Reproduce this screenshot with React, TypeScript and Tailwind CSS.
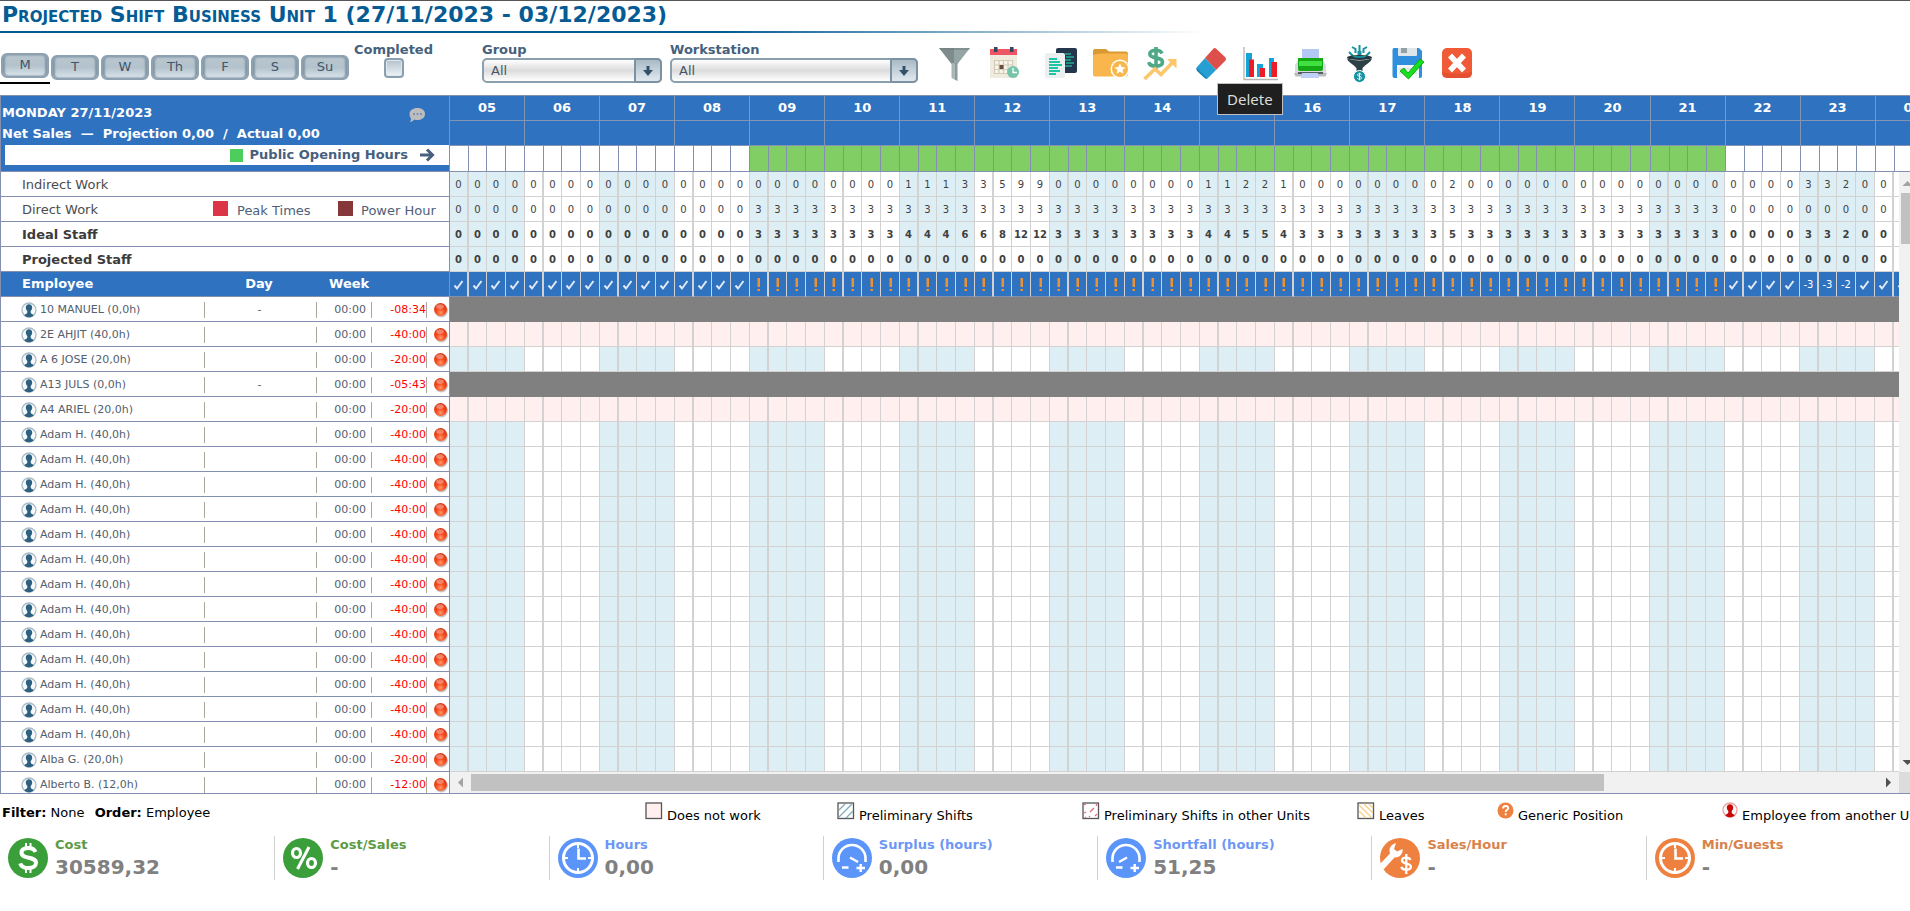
import React, { useState } from "react";

const DAYS = ["M", "T", "W", "Th", "F", "S", "Su"];

const HOURS = [
  "05", "06", "07", "08", "09", "10", "11", "12", "13", "14", "15", "16",
  "17", "18", "19", "20", "21", "22", "23", "00",
];

// quarters that need indirect work, by hour
const INDIRECT: Record<string, number[]> = {
  "11": [1, 1, 1, 3],
  "12": [3, 5, 9, 9],
  "15": [1, 1, 2, 2],
  "16": [1, 0, 0, 0],
  "18": [0, 2, 0, 0],
  "23": [3, 3, 2, 0],
};

interface Slot {
  key: string;
  quarter: number;
  shaded: boolean;
  open: boolean;
  indirect: number;
  direct: number;
}

const SLOTS: Slot[] = HOURS.flatMap((hour, h) =>
  [0, 1, 2, 3].map((quarter) => {
    const open = h >= 4 && h <= 16;
    return {
      key: `${hour}-${quarter}`,
      quarter,
      shaded: h % 2 === 0 && hour !== "00",
      open,
      indirect: INDIRECT[hour] ? INDIRECT[hour][quarter] : 0,
      direct: open ? 3 : 0,
    };
  })
);

type RowKind = "normal" | "off" | "blocked";

interface Employee {
  name: string;
  day: string;
  diff: string;
  kind: RowKind;
}

const EMPLOYEES: Employee[] = [
  { name: "10 MANUEL (0,0h)", day: "-", diff: "-08:34", kind: "blocked" },
  { name: "2E AHJIT (40,0h)", day: "", diff: "-40:00", kind: "off" },
  { name: "A 6 JOSE (20,0h)", day: "", diff: "-20:00", kind: "normal" },
  { name: "A13 JULS (0,0h)", day: "-", diff: "-05:43", kind: "blocked" },
  { name: "A4 ARIEL (20,0h)", day: "", diff: "-20:00", kind: "off" },
  ...Array.from({ length: 13 }, (): Employee => ({ name: "Adam H. (40,0h)", day: "", diff: "-40:00", kind: "normal" })),
  { name: "Alba G. (20,0h)", day: "", diff: "-20:00", kind: "normal" },
  { name: "Alberto B. (12,0h)", day: "", diff: "-12:00", kind: "normal" },
];

/* ---------- icons ---------- */

function UserIcon({ color, ring }: { color: string; ring: string }) {
  return (
    <svg width="16" height="16" viewBox="0 0 16 16" className="shrink-0">
      <circle cx="8" cy="8" r="7" fill="#f7fafc" stroke={ring} strokeWidth="1.3" />
      <path d="M8 2.200c2 0 3.200 1.400 3.200 3.300 0 1.500-.7 2.600-1.500 3.400v1.700c.3 1.600 2.300 1.500 3 2.600-1.200 1.400-2.900 2-4.700 2s-3.500-.6-4.700-2c.7-1.100 2.700-1 3-2.600V8.900C5.500 8.100 4.800 7 4.800 5.500c0-1.900 1.200-3.300 3.200-3.300z" fill={color} />
    </svg>
  );
}

function RedBall() {
  return (
    <svg width="16" height="17" viewBox="0 0 16 17">
      <defs>
        <radialGradient id="ball" cx="50%" cy="75%" r="75%">
          <stop offset="0%" stopColor="#ff9a6a" />
          <stop offset="45%" stopColor="#f8481c" />
          <stop offset="100%" stopColor="#d2330f" />
        </radialGradient>
      </defs>
      <circle cx="8.500" cy="9" r="6.500" fill="#000" opacity=".22" />
      <circle cx="7.500" cy="7.500" r="6.500" fill="url(#ball)" />
      <ellipse cx="7" cy="4.600" rx="3.800" ry="2.400" fill="#fff" opacity=".35" />
    </svg>
  );
}

function FunnelIcon() {
  return (
    <svg width="40" height="40" viewBox="0 0 40 40">
      <path d="M1 4h16v16h-3.500z" fill="#7f8c8d" />
      <path d="M16 4h16L19.500 20H16z" fill="#95a5a5" />
      <path d="M13.500 19h3v16.500l-3-1.800z" fill="#a9b5b5" />
      <path d="M16.500 19h3v18l-3-1.500z" fill="#8b9a9b" />
      <path d="M1 4h31l-1.500 2h-28z" fill="#6d7b7c" opacity=".5" />
    </svg>
  );
}

function CalendarIcon() {
  return (
    <svg width="40" height="40" viewBox="0 0 40 40">
      <path d="M2 11h27v23H2z" fill="#efecdf" />
      <path d="M2 5h27v6H2z" fill="#ee5565" />
      <path d="M6 3h3.500v5H6zM22 3h3.500v5H22z" fill="#34495e" />
      <path d="M6.500 16.500h18v13h-18zM6.500 21h18M6.500 25.500h18M11 16.500v13M15.500 16.500v13M20 16.500v13" fill="#f8f5ec" stroke="#d3cab6" strokeWidth="1.200" />
      <path d="M11.500 21h4v4h-4z" fill="#6b4c3c" />
      <circle cx="25" cy="28" r="6" fill="#76c5ab" />
      <path d="M25 24v4.500h4" fill="none" stroke="#fff" strokeWidth="1.300" />
    </svg>
  );
}

function CopyIcon() {
  return (
    <svg width="40" height="40" viewBox="0 0 40 40">
      <rect x="18" y="4" width="21" height="25" rx="2" fill="#24364b" />
      <path d="M27 10h6M28 13h8M27 16h6M28 19h8M27 22h7" stroke="#1fae96" strokeWidth="1.600" />
      <rect x="7" y="9" width="20" height="25" rx="2" fill="#eceff0" />
      <path d="M11 15h8M11 18h11M11 21h13M11 24h9M11 27h11M11 30h7" stroke="#1fc6a6" strokeWidth="1.800" />
    </svg>
  );
}

function FolderIcon() {
  return (
    <svg width="42" height="40" viewBox="0 0 42 40">
      <path d="M5 7c0-1.500 1-2 2.500-2H18l3 2.500h17c1.500 0 2 1 2 2.500v8H5z" fill="#d99a34" />
      <path d="M5 11c3-1 7-1.500 13-1.500h20c1.500 0 2 1 2 2.500v18.500c0 1.500-1 2-2.500 2h-30c-1.500 0-2.500-.5-2.500-2z" fill="#f8b64c" />
      <circle cx="32" cy="25" r="9.500" fill="#fff" />
      <circle cx="32" cy="25" r="8" fill="#f8b64c" />
      <path d="M32 19.500l1.600 3.500 3.900.4-2.900 2.600.8 3.800-3.400-2-3.400 2 .8-3.800-2.900-2.600 3.900-.4z" fill="#fff" />
    </svg>
  );
}

function SalesIcon() {
  return (
    <svg width="40" height="40" viewBox="0 0 40 40">
      <path d="M24 9.500c-.8-2-3-3.200-6.200-3.200-3.700 0-6 1.400-6 3.800 0 5.500 12.700 2 12.700 8 0 2.600-2.700 4-6.500 4-4 0-6.800-1.500-7.200-4M18 3v22" fill="none" stroke="#4fa886" strokeWidth="3.600" />
      <path d="M6.500 35L17 25l6 5.500L36 17" fill="none" stroke="#fcc66b" strokeWidth="3.600" />
      <path d="M29 15h9.500v9.500z" fill="#fcc66b" />
    </svg>
  );
}

function EraserIcon() {
  return (
    <svg width="40" height="40" viewBox="0 0 40 40">
      <path d="M25.500 4.500q1.500-1 3 .5l9 8.500q1 1.500 0 3L28 26 17 14z" fill="#dc4f4b" />
      <path d="M17 14l11 12-8 8q-1.500 1-3 0L9 26q-1-1.500 0-3z" fill="#26a0d2" />
      <path d="M8.500 23.500l11 11q-1.500.5-3-.5L9 27q-1-2-.5-3.500z" fill="#1c86b4" />
    </svg>
  );
}

function ChartIcon() {
  return (
    <svg width="42" height="40" viewBox="0 0 42 40">
      <path d="M6 3v32.500h34" fill="none" stroke="#b5b5b5" strokeWidth="1.300" />
      <path d="M8 9h6v24H8zM19 20h6v13h-6zM31 14h5v19h-5z" fill="#12a6d8" />
      <path d="M11 15.500h5V33h-5zM22 24h5v9h-5zM33.500 18H39v15h-5.500z" fill="#ee1c25" />
    </svg>
  );
}

function PrinterIcon() {
  return (
    <svg width="40" height="40" viewBox="0 0 40 40">
      <path d="M14 5h17v10H14z" fill="#b3c8f5" />
      <path d="M7 21l3-5h25l3 5v9H7z" fill="#d9dcdf" />
      <path d="M10 14h25v11q0 2-2 2H12q-2 0-2-2z" fill="#14a814" />
      <path d="M11 17h23v5H11z" fill="#3fe03f" />
      <path d="M6 29h33l-1.500 3.500h-30z" fill="#b9bdc0" />
      <path d="M10 28h25v2H10z" fill="#555f5f" />
      <path d="M14 29h16l1 5H13z" fill="#bcd0fa" />
    </svg>
  );
}

function LeadsIcon() {
  return (
    <svg width="44" height="40" viewBox="0 0 44 40">
      <path d="M14 3l3.500 2v4M29 3l-3.500 2v4M21.500 1v7M11 8l4 4M32 8l-4 4" fill="none" stroke="#12939f" strokeWidth="2" />
      <path d="M19.500 7h4v5h-4z" fill="#12939f" />
      <ellipse cx="21.500" cy="13.500" rx="12.500" ry="2.500" fill="#26363c" />
      <path d="M14 12h15l-3 1.800h-9z" fill="#12939f" />
      <path d="M9 14.500q12.500 4 25 0c-1 4-9 7.500-9.500 10V27h-6v-2.500C18 22 10 18.500 9 14.500z" fill="#2d4047" />
      <circle cx="21.500" cy="32.500" r="6" fill="#12939f" stroke="#fff" strokeWidth="1" />
      <path d="M23.500 30.700c-.4-.7-1-1-2-1-1.200 0-2 .5-2 1.300 0 1.900 4 .8 4 2.900 0 .9-.9 1.400-2 1.400s-1.800-.4-2.100-1.200M21.500 28.700v7.600" fill="none" stroke="#fff" strokeWidth=".9" />
    </svg>
  );
}

function SaveIcon() {
  return (
    <svg width="40" height="40" viewBox="0 0 40 40">
      <path d="M6 4h25l3 3v25q0 2-2 2H6.500q-2 0-2-2V6q0-2 1.500-2z" fill="#2f8fdc" />
      <path d="M10 4h19v7q0 1-1 1H11q-1 0-1-1z" fill="#dfe6ea" />
      <path d="M13 4h6v5h-6z" fill="#93a0a6" />
      <path d="M9 21h22v13H9z" fill="#f3f7f9" />
      <path d="M11 25h18M11 29h18" stroke="#c9d4da" />
      <path d="M12 27l4-3 4 5 12-14 4 3-15.500 17z" fill="#14e01c" stroke="#0c960c" strokeWidth=".8" />
    </svg>
  );
}

function CloseIcon() {
  return (
    <svg width="40" height="40" viewBox="0 0 40 40">
      <rect x="4" y="4" width="30" height="30" rx="5" fill="#f05a36" />
      <path d="M4 28q15 4 30 0v1q0 5-5 5H9q-5 0-5-5z" fill="#d9482a" opacity=".5" />
      <path d="M12 11.500l14 15M26 11.500l-14 15" stroke="#fff" strokeWidth="5.500" />
    </svg>
  );
}

const TOOLS: { label: string; icon: React.ReactNode }[] = [
  { label: "Filter", icon: <FunnelIcon /> },
  { label: "Calendar", icon: <CalendarIcon /> },
  { label: "Copy", icon: <CopyIcon /> },
  { label: "Templates", icon: <FolderIcon /> },
  { label: "Sales", icon: <SalesIcon /> },
  { label: "Delete", icon: <EraserIcon /> },
  { label: "Chart", icon: <ChartIcon /> },
  { label: "Print", icon: <PrinterIcon /> },
  { label: "Conversion", icon: <LeadsIcon /> },
  { label: "Save", icon: <SaveIcon /> },
  { label: "Close", icon: <CloseIcon /> },
];

function DollarKpi() {
  return (
    <svg width="40" height="40" viewBox="0 0 40 40">
      <circle cx="20" cy="20" r="20" fill="#3a9f3a" />
      <path d="M27.500 14c-1-2.500-3.500-4-7-4-4.200 0-7 1.700-7 4.700 0 6.800 14.500 3.200 14.500 10 0 3.300-3 5.300-7.500 5.300-4.300 0-7.300-1.700-8.300-4.700" fill="none" stroke="#fff" strokeWidth="4" />
      <path d="M18 5v6M22.500 5v6M18 29v6M22.500 29v6" stroke="#fff" strokeWidth="2" />
    </svg>
  );
}

function PercentKpi() {
  return (
    <svg width="40" height="40" viewBox="0 0 40 40">
      <circle cx="20" cy="20" r="20" fill="#3a9f3a" />
      <ellipse cx="13.500" cy="15" rx="4" ry="4.500" fill="none" stroke="#fff" strokeWidth="3.200" />
      <ellipse cx="28.500" cy="25" rx="4" ry="4.500" fill="none" stroke="#fff" strokeWidth="3.200" />
      <path d="M26 9L14.500 31" stroke="#fff" strokeWidth="3" />
    </svg>
  );
}

function ClockKpi({ color }: { color: string }) {
  return (
    <svg width="40" height="40" viewBox="0 0 40 40">
      <circle cx="20" cy="20" r="20" fill={color} />
      <circle cx="20" cy="20" r="14.500" fill="none" stroke="#fff" strokeWidth="3" />
      <path d="M20 6v4M20 30v4M6 20h4M30 20h4" stroke="#fff" strokeWidth="2" />
      <path d="M20.500 10.500V20.500H28" fill="none" stroke="#fff" strokeWidth="2.600" />
    </svg>
  );
}

function GaugeKpi({ needle }: { needle: string }) {
  return (
    <svg width="40" height="40" viewBox="0 0 40 40">
      <circle cx="20" cy="20" r="20" fill="#5b95f9" />
      <path d="M6.500 24v-3.500a13.500 13.500 0 0 1 27 0V24" fill="none" stroke="#fff" strokeWidth="2.600" />
      <path d={needle} stroke="#fff" strokeWidth="2.400" />
      <path d="M10 29.500h6.500M24.500 30h8.500M28.700 26v8" stroke="#fff" strokeWidth="2.400" />
    </svg>
  );
}

function WrenchKpi() {
  return (
    <svg width="40" height="40" viewBox="0 0 40 40">
      <circle cx="20" cy="20" r="20" fill="#ee8140" />
      <path d="M0 26L10 15.500c-1.500-4.500.5-9 6-10.500l-2 6 3 2.500L22.500 11c1 4.500-3 9-8 8.500L3.500 31.500z" fill="#fff" />
      <path d="M30.500 22c-.7-1.700-2.200-2.300-4.200-2.300-2.600 0-4.300 1-4.300 2.900 0 4 8.900 2 8.900 6 0 2.100-1.900 3.200-4.600 3.200-2.600 0-4.400-.9-5-2.900M26.300 16v20" fill="none" stroke="#fff" strokeWidth="2.300" />
    </svg>
  );
}

interface Kpi {
  label: string;
  value: string;
  color: string;
  icon: React.ReactNode;
}

const KPIS: Kpi[] = [
  { label: "Cost", value: "30589,32", color: "text-[#5d9b45]", icon: <DollarKpi /> },
  { label: "Cost/Sales", value: "-", color: "text-[#5d9b45]", icon: <PercentKpi /> },
  { label: "Hours", value: "0,00", color: "text-[#6d97f5]", icon: <ClockKpi color="#5b95f9" /> },
  { label: "Surplus (hours)", value: "0,00", color: "text-[#6d97f5]", icon: <GaugeKpi needle="M18 19.500l8 4.500" /> },
  { label: "Shortfall (hours)", value: "51,25", color: "text-[#6d97f5]", icon: <GaugeKpi needle="M21 19.500l-8 4.500" /> },
  { label: "Sales/Hour", value: "-", color: "text-[#d8824a]", icon: <WrenchKpi /> },
  { label: "Min/Guests", value: "-", color: "text-[#d8824a]", icon: <ClockKpi color="#ee8140" /> },
];

/* ---------- toolbar ---------- */

function DayTabs() {
  const [day, setDay] = useState("M");
  return (
    <nav className="flex h-[31px] w-[350px] shrink-0">
      {DAYS.map((d) => (
        <div key={d} className={`w-[50px] px-px ${d === day ? "border-b-2 border-black" : "pt-[2px]"}`}>
          <button
            onClick={() => setDay(d)}
            className="block h-[25px] w-full rounded-[6px] border-2 border-[#8da1b0] bg-linear-to-b from-[#b9c6cf] via-[#b3c2cc] to-[#dbe5eb] pb-[2px] text-[13px] leading-[18px] text-[#3d566b] shadow-[inset_2px_0_2px_#8397a6,inset_-2px_0_2px_#8397a6]"
          >
            {d}
          </button>
        </div>
      ))}
    </nav>
  );
}

function Picker({ id, label, width }: { id: string; label: string; width: string }) {
  return (
    <div className={`shrink-0 ${width}`}>
      <label htmlFor={id} className="block h-[15px] text-[13px] leading-[13px] font-bold text-[#46617c]">
        {label}
      </label>
      <div className="relative">
        <select
          id={id}
          className="block h-[25px] w-full appearance-none rounded-[5px] border-2 border-[#8ba0af] bg-linear-to-b from-white via-[#dcdcdc] to-white pl-[7px] text-[13px] text-[#4a5560] outline-none"
        >
          <option>All</option>
        </select>
        <span className="pointer-events-none absolute top-0 right-0 flex h-[25px] w-[28px] items-center justify-center rounded-r-[5px] border-2 border-[#7c92a3] bg-linear-to-b from-[#a9bac6] to-[#e0e9ee]">
          <svg width="12" height="12" viewBox="0 0 12 12">
            <path d="M4.500 1h3v4H11l-5 6-5-6h3.500z" fill="#33506b" />
          </svg>
        </span>
      </div>
    </div>
  );
}

function Toolbar() {
  return (
    <div className="flex h-[62px] items-start pt-[10px]">
      <div className="pt-[10px]">
        <DayTabs />
      </div>
      <div className="ml-[6px] flex w-[75px] shrink-0 flex-col items-center">
        <label htmlFor="completed" className="h-[15px] text-[13px] leading-[13px] font-bold text-[#46617c]">
          Completed
        </label>
        <input
          id="completed"
          type="checkbox"
          className="block size-[20px] appearance-none rounded-[4px] border-2 border-[#8ba0af] bg-linear-to-b from-[#b4c2cc] to-[#eef3f6] shadow-[inset_0_0_0_1px_#dfe8ee]"
        />
      </div>
      <div className="ml-[51px]">
        <Picker id="group" label="Group" width="w-[180px]" />
      </div>
      <div className="ml-[8px]">
        <Picker id="workstation" label="Workstation" width="w-[248px]" />
      </div>
      <div className="ml-[20px] flex pt-px">
        {TOOLS.map((tool) => (
          <div key={tool.label} className="relative w-[50px]">
            <button aria-label={tool.label} className="block">
              {tool.icon}
            </button>
            {tool.label === "Delete" && (
              <span role="tooltip" className="absolute top-[39px] left-[29px] z-10 border border-[#c0c0c0] bg-[#1f1f1f] px-[9px] font-['Noto_Sans',sans-serif] text-[15px] leading-[30px] text-[#dcdcdc]">
                Delete
              </span>
            )}
          </div>
        ))}
      </div>
    </div>
  );
}

/* ---------- left panel ---------- */

const rowLine = "border-b border-[#8490b0]";

function LeftPanel() {
  return (
    <section className="w-[450px] shrink-0 border-x border-[#8490b0]">
      <div className={`h-[76px] bg-[#2f72c0] pt-[6px] text-[13px] font-bold text-white ${rowLine}`}>
        <div className="flex h-[21px] items-center pl-px leading-[21px]">
          <span className="w-[407px]">MONDAY 27/11/2023</span>
          <svg width="17" height="16" viewBox="0 0 17 16" className="mt-[5px]">
            <path d="M8.500 1C13 1 16 3.500 16 7s-3 6-7.500 6c-1.200 0-2.300-.2-3.300-.6C4 13.700 2.500 14.700.8 15c.8-1 1.300-2 1.200-3.600C1 10.200.5 8.700.5 7 .5 3.500 4 1 8.500 1z" fill="#bdbdbd" />
            <path d="M4 6h2v2H4zM7.500 6h2v2h-2zM11 6h2v2h-2z" fill="#7c93b5" />
          </svg>
        </div>
        <div className="h-[22px] pl-px leading-[21px] whitespace-pre">Net Sales  —  Projection 0,00  /  Actual 0,00</div>
        <div className="ml-[4px] flex h-[20px] items-center justify-end bg-white pr-[14px] text-[#46607e]">
          <span className="mr-[7px] size-[13px] bg-[#4ccd5c]" />
          Public Opening Hours
          <svg width="15" height="14" viewBox="0 0 15 14" className="ml-[12px]">
            <path d="M0 7h12M7 1.500L12.500 7 7 12.500" fill="none" stroke="#46607e" strokeWidth="3" />
          </svg>
        </div>
      </div>

      <div className={`flex h-[25px] items-center pt-px pl-[21px] text-[13px] text-[#4c4c4c] ${rowLine}`}>Indirect Work</div>
      <div className={`flex h-[25px] items-center pt-px pl-[21px] text-[13px] text-[#4c4c4c] ${rowLine}`}>
        <span className="w-[191px]">Direct Work</span>
        <span className="mr-[9px] mb-[2px] size-[15px] bg-[#dc3545]" />
        <span className="w-[101px] pt-[3px] text-[#4e6178]">Peak Times</span>
        <span className="mr-[8px] mb-[2px] size-[15px] bg-[#853739]" />
        <span className="pt-[3px] whitespace-nowrap text-[#4e6178]">Power Hour</span>
      </div>
      <div className={`flex h-[25px] items-center pt-px pl-[21px] text-[13px] font-bold text-[#3b3b3b] ${rowLine}`}>Ideal Staff</div>
      <div className={`flex h-[25px] items-center pt-px pl-[21px] text-[13px] font-bold text-[#3b3b3b] ${rowLine}`}>Projected Staff</div>

      <table className="w-full table-fixed border-separate border-spacing-0">
        <colgroup>
          <col className="w-[204px]" />
          <col className="w-[112px]" />
          <col className="w-[55px]" />
          <col className="w-[55px]" />
          <col />
        </colgroup>
        <thead>
          <tr className="h-[25px] bg-[#2f72c0] text-[13px] leading-[20px] text-white">
            <th className={`p-0 pl-[21px] text-left ${rowLine}`}>Employee</th>
            <th className={`p-0 pr-[4px] text-center ${rowLine}`}>Day</th>
            <th className={`p-0 pl-[12px] text-left ${rowLine}`}>Week</th>
            <th className={`p-0 ${rowLine}`} />
            <th className={`p-0 ${rowLine}`} />
          </tr>
        </thead>
        <tbody className="align-top text-[11px] text-[#53606d]">
          {EMPLOYEES.map((e, i) => {
            const last = i === EMPLOYEES.length - 1;
            const cell = last ? "p-0 pt-[5px] h-[21px]" : `p-0 pt-[5px] h-[25px] ${rowLine}`;
            const inner = "flex h-[16px] items-center border-r border-[#a9a899]";
            return (
              <tr key={i}>
                <td className={cell}>
                  <div className={`${inner} gap-[3px] pl-[20px] whitespace-nowrap`}>
                    <UserIcon color="#2d617f" ring="#a9bcc8" />
                    {e.name}
                  </div>
                </td>
                <td className={cell}>
                  <div className={`${inner} justify-center pr-[2px]`}>{e.day}</div>
                </td>
                <td className={cell}>
                  <div className={`${inner} justify-end pr-[5px]`}>00:00</div>
                </td>
                <td className={cell}>
                  <div className={`${inner} justify-end text-[#ff0000]`}>{e.diff}</div>
                </td>
                <td className={cell}>
                  <div className="flex h-[16px] justify-end">
                    <RedBall />
                  </div>
                </td>
              </tr>
            );
          })}
        </tbody>
      </table>
    </section>
  );
}

/* ---------- time grid ---------- */

function SlotCols() {
  return (
    <colgroup>
      {HOURS.map((h) => (
        <React.Fragment key={h}>
          <col className="w-[19px]" />
          <col className="w-[18px]" />
          <col className="w-[19px]" />
          <col className="w-[19px]" />
        </React.Fragment>
      ))}
    </colgroup>
  );
}

function slotBorder(slot: Slot) {
  return slot.quarter === 0 ? "border-r-2" : "border-r";
}

function NumberRow({ value, bold }: { value: (s: Slot) => number; bold?: boolean }) {
  return (
    <tr className={`text-[10px] text-[#3f3f3f] ${bold ? "font-bold" : ""}`}>
      {SLOTS.map((s) => (
        <td
          key={s.key}
          className={`h-[25px] border-b border-[#d2d2d2] p-0 pt-px text-center ${slotBorder(s)} ${s.shaded ? "bg-[#deeef5]" : "bg-white"}`}
        >
          {value(s)}
        </td>
      ))}
    </tr>
  );
}

function StatusMark({ slot }: { slot: Slot }) {
  if (slot.open) {
    return (
      <svg width="5" height="14" viewBox="0 0 5 14" className="mx-auto" aria-label="understaffed">
        <path d="M1.500 0h2.500v9H1.500zM1.500 11H4v2H1.500z" fill="#ee9230" />
      </svg>
    );
  }
  if (slot.indirect > 0) {
    return <>-{slot.indirect}</>;
  }
  return (
    <svg width="12" height="12" viewBox="0 0 12 12" className="mx-auto" aria-label="ok">
      <path d="M1.500 6.500l2.500 3 5.500-7.500" fill="none" stroke="#dfe9f7" strokeWidth="2" />
    </svg>
  );
}

function TimeGrid() {
  return (
    <section className="min-w-0 flex-1 overflow-hidden">
      <table className="w-[1500px] table-fixed border-separate border-spacing-0">
        <SlotCols />
        <thead>
          <tr className="bg-[#2f72c0] text-[13px] text-white">
            {HOURS.map((h) => (
              <th key={h} colSpan={4} className="h-[25px] border-r border-b border-[#8494b4] p-0 text-center leading-[20px]">
                {h}
              </th>
            ))}
          </tr>
          <tr className="bg-[#2f72c0]">
            {HOURS.map((h) => (
              <td key={h} colSpan={4} className="h-[25px] border-r border-b border-[#8494b4] p-0" />
            ))}
          </tr>
          <tr>
            {SLOTS.map((s) => (
              <td key={s.key} className={`h-[26px] border-r border-b border-[#8490b0] p-0 ${s.open ? "bg-[#81ce65]" : "bg-white"}`} />
            ))}
          </tr>
        </thead>
      </table>

      <div className="flex">
        <div className="min-w-0 flex-1 overflow-hidden">
          <table className="w-[1500px] table-fixed border-separate border-spacing-0">
            <SlotCols />
            <tbody>
              <NumberRow value={(s) => s.indirect} />
              <NumberRow value={(s) => s.direct} />
              <NumberRow value={(s) => s.indirect + s.direct} bold />
              <NumberRow value={() => 0} bold />
              <tr className="bg-[#2f72c0] text-[10px] text-white">
                {SLOTS.map((s) => (
                  <td key={s.key} className={`h-[25px] border-r-[#d2d2d2] border-b border-b-[#8490b0] p-0 pt-px text-center ${slotBorder(s)}`}>
                    <StatusMark slot={s} />
                  </td>
                ))}
              </tr>
              {EMPLOYEES.slice(0, -1).map((e, i) =>
                e.kind === "blocked" ? (
                  <tr key={i}>
                    <td colSpan={SLOTS.length} className="h-[25px] bg-[#808080] p-0" />
                  </tr>
                ) : (
                  <tr key={i}>
                    {SLOTS.map((s) => (
                      <td
                        key={s.key}
                        className={`h-[25px] border-b border-[#d2d2d2] p-0 ${slotBorder(s)} ${
                          e.kind === "off" ? "bg-[#ffefee]" : s.shaded ? "bg-[#deeef5]" : "bg-white"
                        }`}
                      />
                    ))}
                  </tr>
                )
              )}
            </tbody>
          </table>
        </div>
        <div className="w-[11px] shrink-0 overflow-hidden bg-[#f1f1f1]">
          <div className="flex h-full w-[17px] flex-col items-center">
            <svg width="17" height="21" viewBox="0 0 17 21">
              <path d="M3.500 14h10l-5-5z" fill="#a3a3a3" />
            </svg>
            <div className="h-[51px] w-[13px] bg-[#c1c1c1]" />
            <svg width="17" height="17" viewBox="0 0 17 17" className="mt-auto">
              <path d="M3.500 5h10l-5 5z" fill="#505050" />
            </svg>
          </div>
        </div>
      </div>

      <div className="flex h-[21px] items-center bg-[#f1f1f1]">
        <svg width="21" height="17" viewBox="0 0 21 17">
          <path d="M13 3.500v10L8 8.500z" fill="#a3a3a3" />
        </svg>
        <div className="h-[17px] w-[77.6%] bg-[#c1c1c1]" />
        <svg width="17" height="17" viewBox="0 0 17 17" className="ml-auto">
          <path d="M4 3.500v10l5-5z" fill="#505050" />
        </svg>
        <div className="h-full w-[11px] bg-[#dcdcdc]" />
      </div>
    </section>
  );
}

/* ---------- footer ---------- */

function LegendBox({ stroke, d, fill }: { stroke: string; d: string; fill: string }) {
  return (
    <svg width="18" height="18" viewBox="0 0 18 18" className="shrink-0">
      <rect x="1" y="1" width="15.500" height="15.500" fill={fill} stroke="#555" strokeWidth="1.300" />
      <path d={d} stroke={stroke} strokeWidth="1.300" fill="none" />
    </svg>
  );
}

function Legend() {
  const item = "flex shrink-0 items-start gap-[4px]";
  return (
    <div className="flex h-[42px] overflow-hidden pt-[8px] text-[13px] whitespace-nowrap text-black">
      <p className="w-[645px] shrink-0 pl-[2px] leading-[22px]">
        <b>Filter:</b> None <b className="ml-[6px]">Order:</b> Employee
      </p>
      <div className={`${item} w-[192px]`}>
        <LegendBox fill="#ffefee" stroke="none" d="" />
        <span className="leading-[28px]">Does not work</span>
      </div>
      <div className={`${item} w-[245px]`}>
        <LegendBox fill="#fff" stroke="#7fabbd" d="M2 8l6-6M2 15L15 2M9 16l7-7" />
        <span className="leading-[28px]">Preliminary Shifts</span>
      </div>
      <div className={`${item} w-[275px]`}>
        <LegendBox fill="#fff" stroke="#e8697a" d="M2 3l2-1M8 10l4-4M2 11l2-1M7 15l1-1M14 4l1-2M13 14l2-2M3 15l1 1" />
        <span className="leading-[28px]">Preliminary Shifts in other Units</span>
      </div>
      <div className={`${item} w-[140px]`}>
        <LegendBox fill="#fff" stroke="#f5cf85" d="M2 9l7 7M2 3l13 13M7 2l9 9M12 2l4 4" />
        <span className="leading-[28px]">Leaves</span>
      </div>
      <div className={`${item} w-[225px]`}>
        <svg width="17" height="17" viewBox="0 0 17 17" className="shrink-0">
          <circle cx="8.500" cy="8.500" r="8" fill="#ee8140" />
          <path d="M6 6.500c0-1.600 1.100-2.500 2.600-2.500s2.600.9 2.600 2.200c0 1.600-2.500 1.700-2.500 3.700M8.700 11.300v2" fill="none" stroke="#fff" strokeWidth="1.800" />
        </svg>
        <span className="leading-[28px]">Generic Position</span>
      </div>
      <div className={item}>
        <UserIcon color="#c90808" ring="#eba0a0" />
        <span className="leading-[28px]">Employee from another Unit</span>
      </div>
    </div>
  );
}

function KpiBar() {
  return (
    <div className="-mr-[10px] grid grid-cols-7">
      {KPIS.map((k, i) => (
        <div key={k.label} className={`flex h-[44px] items-center gap-[7px] pl-[8px] ${i > 0 ? "border-l border-[#d0d0d0]" : ""}`}>
          {k.icon}
          <div className="font-bold">
            <div className={`text-[13px] leading-[18px] ${k.color}`}>{k.label}</div>
            <div className="text-[20px] leading-[27px] text-[#808080]">{k.value}</div>
          </div>
        </div>
      ))}
    </div>
  );
}

export default function App() {
  return (
    <div className="overflow-hidden border-t border-[#555] bg-white font-[Verdana,'DejaVu_Sans',sans-serif]">
      <h1 className="h-[30px] pl-[2px] text-[22px] leading-[28px] font-bold whitespace-nowrap text-[#055b94] [font-variant:small-caps]">
        Projected Shift Business Unit 1 (27/11/2023 - 03/12/2023)
      </h1>
      <div className="h-[2px] w-[1205px] bg-linear-to-r from-[#055b94] from-60% to-transparent" />
      <Toolbar />
      <main className="flex border-y border-[#8490b0]">
        <LeftPanel />
        <TimeGrid />
      </main>
      <Legend />
      <KpiBar />
    </div>
  );
}
